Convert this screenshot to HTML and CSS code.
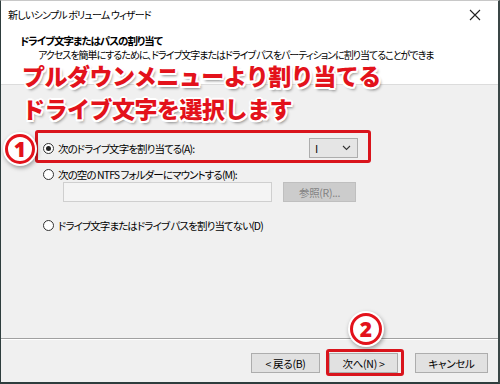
FILE: index.html
```html
<!doctype html>
<html lang="ja">
<head>
	<meta charset="utf-8">
	<title>新しいシンプル ボリューム ウィザード</title>
	<link rel="stylesheet" href="styles.css">
</head>
<body>
	<div class="window">
		<!--タイトルバー-->
		<div class="titlebar">
			<span class="caption">新しいシンプル ボリューム ウィザード</span>
			<svg class="close" width="12" height="12" viewBox="0 0 12 12">
				<path d="M1 1 L11 11 M11 1 L1 11" stroke="#222" stroke-width="1.1" fill="none"/>
			</svg>
		</div>
		<!--ヘッダー-->
		<div class="header">
			<div class="heading">ドライブ文字またはパスの割り当て</div>
			<div class="subheading">アクセスを簡単にするために、ドライブ文字またはドライブ パスをパーティションに割り当てることができま</div>
		</div>
		<!--本体-->
		<div class="content">
			<div class="option first">
				<span class="radio checked"></span>
				<span class="label">次のドライブ文字を割り当てる(A):</span>
				<div class="select">
					<span>I</span>
					<svg width="9" height="6" viewBox="0 0 9 6">
						<path d="M1 1 L4.5 4.5 L8 1" stroke="#333" stroke-width="1.1" fill="none"/>
					</svg>
				</div>
			</div>
			<div class="option">
				<span class="radio"></span>
				<span class="label">次の空の NTFS フォルダーにマウントする(M):</span>
			</div>
			<div class="pathRow">
				<div class="pathInput"></div>
				<div class="btn disabled">参照(R)...</div>
			</div>
			<div class="option last">
				<span class="radio"></span>
				<span class="label">ドライブ文字またはドライブ パスを割り当てない(D)</span>
			</div>
		</div>
		<!--フッター-->
		<div class="footer">
			<div class="btn">&lt; 戻る(B)</div>
			<div class="btn next">次へ(N) &gt;</div>
			<div class="btn cancel">キャンセル</div>
		</div>
	</div>

	<!--注釈-->
	<div class="note">プルダウンメニューより割り当てる<br>ドライブ文字を選択します</div>
	<div class="markBox box1"></div>
	<div class="markBox box2"></div>
	<div class="num num1">1</div>
	<div class="num num2">2</div>
</body>
</html>
```

FILE: styles.css
```css
body {
	margin: 0;
	width: 500px;
	height: 384px;
	overflow: hidden;
	position: relative;
	font-family: "Noto Sans CJK JP", "Noto Sans", sans-serif;
	font-feature-settings: "palt";
	font-size: 11px;
	color: #000;
}

.window {
	box-sizing: border-box;
	height: 384px;
	display: flex;
	flex-direction: column;
	border-left: 1px solid #2e3d3d;
	border-right: 2px solid #3a4646;
	border-bottom: 2px solid #2e3d3d;
	border-top: 1px solid #c8c8c8;
}

/*タイトルバー*/
.titlebar {
	height: 27px;
	background: #fff;
	display: flex;
	align-items: center;
	justify-content: space-between;
	padding: 0 17px 0 7px;
}

.caption {
	font-size: 10px;
	letter-spacing: -0.8px;
}

/*ヘッダー*/
.header {
	height: 56px;
	background: #fff;
	padding-left: 19px;
	border-bottom: 1px solid #dcdcdc;
}

.heading {
	font-weight: bold;
	font-size: 10.5px;
	line-height: 14px;
	letter-spacing: -1px;
	margin-top: 6px;
}

.subheading {
	font-size: 10px;
	line-height: 14px;
	letter-spacing: -1px;
	padding-left: 18px;
	white-space: nowrap;
}

/*本体*/
.content {
	flex: 1;
	background: #f0f0f0;
	padding: 53px 0 0 42px;
}

.option {
	display: flex;
	align-items: center;
	height: 20px;
}

.option.first {
	margin-bottom: 6px;
}

.option.last {
	margin-top: 13px;
}

.radio {
	box-sizing: border-box;
	width: 11px;
	height: 11px;
	border: 1px solid #333;
	border-radius: 50%;
	background: #fff;
	margin-right: 4px;
	display: flex;
	align-items: center;
	justify-content: center;
}

.radio.checked::after {
	content: "";
	width: 5px;
	height: 5px;
	border-radius: 50%;
	background: #222;
}

.label {
	font-size: 10.5px;
	letter-spacing: -0.9px;
}

.select {
	box-sizing: border-box;
	width: 49px;
	height: 20px;
	margin-left: auto;
	margin-right: 140px;
	background: #e5e5e5;
	border: 1px solid #adadad;
	display: flex;
	align-items: center;
	justify-content: space-between;
	padding: 0 6px 0 5px;
}

.pathRow {
	display: flex;
	gap: 11px;
	margin-left: 20px;
	margin-top: -2px;
}

.pathInput {
	box-sizing: border-box;
	width: 209px;
	height: 20px;
	background: #f4f4f4;
	border: 1px solid #cfcfcf;
}

/*ボタン*/
.btn {
	box-sizing: border-box;
	width: 73px;
	height: 20px;
	background: #e1e1e1;
	border: 1px solid #adadad;
	display: flex;
	align-items: center;
	justify-content: center;
	font-size: 10.5px;
	letter-spacing: -0.3px;
}

.btn.disabled {
	background: #cccccc;
	border-color: #bfbfbf;
	color: #838383;
}

/*フッター*/
.footer {
	height: 44px;
	background: #f0f0f0;
	border-top: 1px solid #a0a0a0;
	box-shadow: inset 0 1px 0 #fff;
	display: flex;
	justify-content: flex-end;
	padding: 14px 10px 0 0;
	box-sizing: border-box;
}

.footer .btn {
	width: 69px;
}

.btn.next {
	margin-left: 9px;
}

.btn.cancel {
	width: 73px;
	margin-left: 17px;
}

/*注釈*/
.note {
	position: absolute;
	left: 22px;
	top: 59px;
	font-family: "Noto Sans CJK JP", sans-serif;
	font-feature-settings: normal;
	font-weight: 900;
	font-size: 23px;
	line-height: 33px;
	letter-spacing: -0.5px;
	color: #e3121b;
	text-shadow:
		2px 0 0 #fff, -2px 0 0 #fff, 0 2px 0 #fff, 0 -2px 0 #fff,
		1.5px 1.5px 0 #fff, -1.5px 1.5px 0 #fff, 1.5px -1.5px 0 #fff, -1.5px -1.5px 0 #fff,
		2px 3px 3px rgba(0, 0, 0, .45);
}

.markBox {
	position: absolute;
	box-sizing: border-box;
	border: 3px solid #d9141c;
	border-radius: 3px;
}

.box1 {
	left: 35px;
	top: 130px;
	width: 336px;
	height: 33px;
}

.box2 {
	left: 326px;
	top: 349px;
	width: 78px;
	height: 27px;
}

/*丸数字*/
.num {
	position: absolute;
	box-sizing: border-box;
	width: 30px;
	height: 30px;
	border: 3px solid #e3121b;
	border-radius: 50%;
	box-shadow: 0 0 0 2px #fff, 1px 2px 4px 2px rgba(0, 0, 0, .35), inset 0 0 0 2px #fff;
	background: #fff;
	display: flex;
	align-items: center;
	justify-content: center;
	font-family: "Noto Sans", sans-serif;
	font-weight: 900;
	font-size: 21px;
	line-height: 1;
	color: #e3121b;
}

.num1 {
	left: 5px;
	top: 134px;
}

.num2 {
	left: 350px;
	top: 313px;
	width: 32px;
	height: 32px;
}
```
